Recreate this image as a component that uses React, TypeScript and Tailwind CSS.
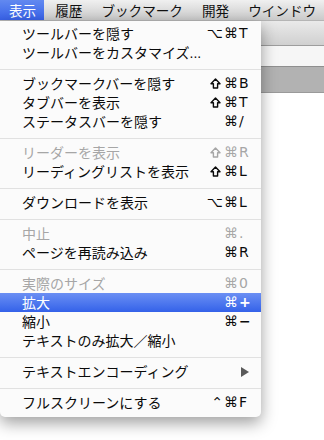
import React from "react";

type Row =
  | { sep: true }
  | {
      sep?: false;
      label: React.ReactNode;
      mods?: string;
      k?: string;
      kBold?: boolean;
      disabled?: boolean;
      active?: boolean;
      submenu?: boolean;
    };

const rows: Row[] = [
  { label: "ツールバーを隠す", mods: "⌥⌘", k: "T" },
  {
    label: (
      <>
        ツールバーをカスタマイズ
        <span className="font-['Liberation_Sans',sans-serif]">...</span>
      </>
    ),
  },
  { sep: true },
  { label: "ブックマークバーを隠す", mods: "⇧⌘", k: "B" },
  { label: "タブバーを表示", mods: "⇧⌘", k: "T" },
  { label: "ステータスバーを隠す", mods: "⌘", k: "/" },
  { sep: true },
  { label: "リーダーを表示", mods: "⇧⌘", k: "R", disabled: true },
  { label: "リーディングリストを表示", mods: "⇧⌘", k: "L" },
  { sep: true },
  { label: "ダウンロードを表示", mods: "⌥⌘", k: "L" },
  { sep: true },
  { label: "中止", mods: "⌘", k: ".", disabled: true },
  { label: "ページを再読み込み", mods: "⌘", k: "R" },
  { sep: true },
  { label: "実際のサイズ", mods: "⌘", k: "0", disabled: true },
  { label: "拡大", mods: "⌘", k: "+", kBold: true, active: true },
  { label: "縮小", mods: "⌘", k: "−", kBold: true },
  { label: "テキストのみ拡大／縮小" },
  { sep: true },
  { label: "テキストエンコーディング", submenu: true },
  { sep: true },
  { label: "フルスクリーンにする", mods: "⌃⌘", k: "F" },
];

const menubar = ["表示", "履歴", "ブックマーク", "開発", "ウインドウ"];

function Mod({ c }: { c: string }) {
  if (c === "⇧") {
    return (
      <svg width="11" height="11" viewBox="0 0 11 11" className="mr-[3px] self-center">
        <path
          d="M5.5 1 L10 5.8 H7.6 V10 H3.4 V5.8 H1 Z"
          fill="none"
          stroke="currentColor"
          strokeWidth="1.4"
          strokeLinejoin="round"
        />
      </svg>
    );
  }
  return <span className="mr-[1px]">{c}</span>;
}

export default function App() {
  return (
    <div className="relative w-[324px] h-[440px] overflow-hidden bg-white font-['Noto_Sans_CJK_JP',sans-serif] text-[14px] text-black">
      <div className="flex flex-col h-full">
        <div className="h-[21px] flex whitespace-nowrap text-[13.6px] bg-gradient-to-b from-[#f0f0f0] to-[#cacaca] border-b border-[#b5b5b5]">
          {menubar.map((m, i) => (
            <div
              key={m}
              className={
                i === 0
                  ? "shrink-0 h-[20px] leading-[20px] pl-[9px] pr-[8px] text-white bg-gradient-to-b from-[#6289f0] to-[#3861e8]"
                  : "shrink-0 h-[20px] leading-[20px] pl-[11px] pr-[8px] text-[#111]"
              }
            >
              {m}
            </div>
          ))}
        </div>
        <div className="h-[25px] bg-gradient-to-b from-[#eaeaea] to-[#d0d0d0] border-b border-[#9d9d9d]" />
        <div className="h-[21px] bg-[#f6f6f6] border-b border-[#8f8f8f]" />
        <div className="h-[26px] bg-[#b2b2b2] border-b border-[#9a9a9a]" />
        <div className="flex-1 bg-white" />
      </div>

      <div className="absolute left-0 top-[21px] w-[261px] bg-[#fbfbfb] rounded-b-[5px] pt-[3px] pb-[5px] shadow-[0_6px_16px_rgba(0,0,0,0.38)]">
        {rows.map((r, i) =>
          r.sep ? (
            <div key={i} className="h-[12px] pt-[7px]">
              <div className="h-px bg-[#e1e1e1]" />
            </div>
          ) : (
            <div
              key={i}
              className={
                "h-[19px] leading-[19px] flex items-center pl-[22px] pr-[11px] " +
                (r.active
                  ? "text-white bg-gradient-to-b from-[#6b8ff3] to-[#3461e9]"
                  : r.disabled
                  ? "text-[#a6a6a6]"
                  : "text-[#0a0a0a]")
              }
            >
              <div className="flex-1 whitespace-nowrap">{r.label}</div>
              {r.mods && (
                <div className="flex items-baseline font-['DejaVu_Sans',sans-serif] text-[14px]">
                  {Array.from(r.mods).map((c, j) => (
                    <Mod key={j} c={c} />
                  ))}
                  <span className={"w-[11px] " + (r.kBold ? "font-bold" : "")}>
                    {r.k}
                  </span>
                </div>
              )}
              {r.submenu && (
                <svg width="8" height="10" viewBox="0 0 8 10" className="mr-[1px]">
                  <path d="M0 0 L8 5 L0 10 Z" fill="#5a5a5a" />
                </svg>
              )}
            </div>
          )
        )}
      </div>
    </div>
  );
}
